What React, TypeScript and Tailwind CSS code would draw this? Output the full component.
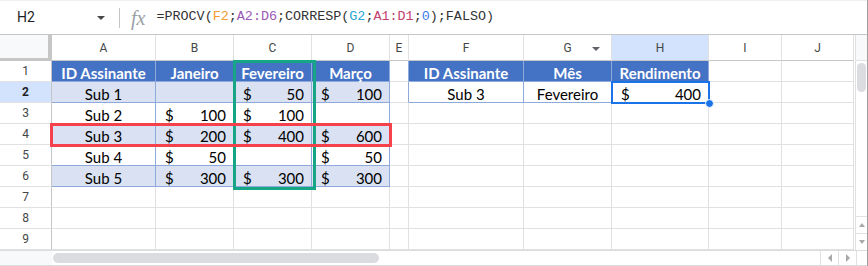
import React from 'react';

const COLS = ['A', 'B', 'C', 'D', 'E', 'F', 'G', 'H', 'I', 'J'];
const ROWS = [1, 2, 3, 4, 5, 6, 7, 8, 9];

type Val = string | number | null;

// tabela da esquerda (A1:D6)
const left: Val[][] = [
  ['ID Assinante', 'Janeiro', 'Fevereiro', 'Março'],
  ['Sub 1', null, 50, 100],
  ['Sub 2', 100, 100, null],
  ['Sub 3', 200, 400, 600],
  ['Sub 4', 50, null, 50],
  ['Sub 5', 300, 300, 300],
];

// tabela da direita (F1:H2)
const right: Val[][] = [
  ['ID Assinante', 'Mês', 'Rendimento'],
  ['Sub 3', 'Fevereiro', 400],
];

const grid = 'border-r border-b border-[#e1e1e1]';
const tbl = 'border-r border-b border-[#8eaadb]';

function Money({ v }: { v: number }) {
  return (
    <div className="flex justify-between pl-[9px] pr-[7px]">
      <span>$</span>
      <span>{v}</span>
    </div>
  );
}

function Cell({ r, c }: { r: number; c: number }) {
  let v: Val = null;
  let cls = grid;
  let header = false;

  if (c <= 3 && r <= 6) {
    v = left[r - 1][c];
    header = r === 1;
    cls = `${tbl} ${header ? 'bg-[#4472c4]' : r % 2 === 0 ? 'bg-[#d9e1f2]' : 'bg-white'}`;
  } else if (c >= 5 && c <= 7 && r <= 2) {
    v = right[r - 1][c - 5];
    header = r === 1;
    cls = `${tbl} ${header ? 'bg-[#4472c4]' : 'bg-white'}`;
  } else if (c === 4 && r <= 2) {
    cls = 'border-r border-b border-r-[#8eaadb] border-b-[#e1e1e1]';
  }

  return (
    <div
      className={`box-border h-full overflow-visible pt-[2px] text-[15px] leading-[20px] font-['Lato',sans-serif] ${cls} ${
        header ? 'font-bold text-white text-center' : 'text-black'
      }`}
    >
      {typeof v === 'number' && !header ? (
        <Money v={v} />
      ) : v !== null ? (
        <div className="text-center whitespace-nowrap">{v}</div>
      ) : null}
    </div>
  );
}

function FormulaBar() {
  return (
    <div className="flex h-[35px] items-center border-b border-t border-b-[#c4c7c5] border-t-[#efefef] bg-white">
      <div className="flex w-[119px] items-center">
        <span className="pl-[17px] font-['Roboto',sans-serif] text-[14px] text-[#1f1f1f]">H2</span>
        <span className="ml-[62px] h-0 w-0 border-x-[4px] border-t-[4px] border-x-transparent border-t-[#444746]" />
      </div>
      <div className="h-[20px] w-px bg-[#c4c7c5]" />
      <span className="ml-[11px] font-['Liberation_Serif',serif] text-[20px] italic leading-none text-[#9aa0a6]">fx</span>
      <span className="ml-[11px] font-['Liberation_Mono',monospace] text-[13.4px] text-[#333]">
        =PROCV(<span className="text-[#f29b2f]">F2</span>;<span className="text-[#9b59b6]">A2:D6</span>;CORRESP(
        <span className="text-[#2aa8d2]">G2</span>;<span className="text-[#c2416e]">A1:D1</span>;
        <span className="text-[#3b78e7]">0</span>);FALSO)
      </span>
    </div>
  );
}

export default function App() {
  return (
    <div className="relative h-[266px] w-[868px] overflow-hidden border-r border-[#a0a0a0] bg-white">
      <FormulaBar />

      <div className="flex">
        <div className="relative grid w-[854px] grid-cols-[52px_104px_78px_78px_78px_19px_115px_88px_97px_73px_72px] grid-rows-[26px_repeat(9,21px)]">
          {/* canto */}
          <div className="border-b-[3px] border-r-[4px] border-[#c6c6c6] bg-[#f8f9fa]" />
          {COLS.map((c) => (
            <div
              key={c}
              className={`relative flex items-center justify-center border-b border-r border-b-[#c4c7c5] border-r-[#e1e1e1] font-['Roboto',sans-serif] text-[12px] text-[#444746] ${
                c === 'H' ? 'bg-[#d3e3fd] text-[#1f1f1f]' : 'bg-white'
              }`}
            >
              {c}
              {c === 'G' && (
                <span className="absolute right-[11px] top-[12px] h-0 w-0 border-x-[4px] border-t-[4px] border-x-transparent border-t-[#5f6368]" />
              )}
            </div>
          ))}

          {ROWS.map((r) => (
            <React.Fragment key={r}>
              <div
                className={`flex items-center justify-center border-b border-r border-b-[#e1e1e1] border-r-[#c4c7c5] font-['Roboto',sans-serif] text-[12px] ${
                  r === 2 ? 'bg-[#d3e3fd] font-bold text-[#1f1f1f]' : 'bg-white text-[#444746]'
                }`}
              >
                {r}
              </div>
              {COLS.map((_, c) => (
                <Cell key={c} r={r} c={c} />
              ))}
            </React.Fragment>
          ))}

          {/* coluna Fevereiro destacada */}
          <div className="pointer-events-none absolute left-[233px] top-[25px] h-[130px] w-[83px] border-[3px] border-[#17a685]" />
          {/* linha Sub 3 destacada */}
          <div className="pointer-events-none absolute left-[50px] top-[88px] h-[24px] w-[342px] border-[3px] border-[#f5414b]" />
          {/* seleção H2 */}
          <div className="pointer-events-none absolute left-[611px] top-[46px] h-[23px] w-[99px] border-2 border-[#1a73e8]">
            <span className="absolute -bottom-[6px] -right-[6px] h-[9px] w-[9px] rounded-full border border-white bg-[#1a73e8]" />
          </div>
        </div>

        {/* barra de rolagem vertical */}
        <div className="flex w-[13px] flex-col border-l border-[#e1e1e1] ml-px">
          <div className="h-[26px] border-b border-[#e1e1e1] bg-[#f8f9fa]" />
          <div className="flex-1 pt-[2px]">
            <div className="mx-auto h-[29px] w-[9px] rounded-full bg-[#dadce0]" />
          </div>
          <div className="flex h-[17px] items-center justify-center border-t border-[#e1e1e1]">
            <span className="h-0 w-0 border-x-[3px] border-b-[4px] border-x-transparent border-b-[#a8a8a8]" />
          </div>
          <div className="flex h-[17px] items-center justify-center border-t border-[#e1e1e1]">
            <span className="h-0 w-0 border-x-[3px] border-t-[4px] border-x-transparent border-t-[#a8a8a8]" />
          </div>
        </div>
      </div>

      {/* barra de rolagem horizontal */}
      <div className="flex h-[16px] border-b border-t border-[#dadce0]">
        <div className="w-[52px] bg-[#f8f9fa]" />
        <div className="flex-1 pt-[2px] pl-px">
          <div className="h-[10px] w-[326px] rounded-full bg-[#dadce0]" />
        </div>
        <div className="flex w-[18px] items-center justify-center border-l border-[#e1e1e1]">
          <span className="h-0 w-0 border-y-[4px] border-r-[4px] border-y-transparent border-r-[#a8a8a8]" />
        </div>
        <div className="flex w-[18px] items-center justify-center border-l border-[#e1e1e1]">
          <span className="h-0 w-0 border-y-[4px] border-l-[4px] border-y-transparent border-l-[#a8a8a8]" />
        </div>
        <div className="w-[11px] border-l border-[#e1e1e1]" />
      </div>
    </div>
  );
}
